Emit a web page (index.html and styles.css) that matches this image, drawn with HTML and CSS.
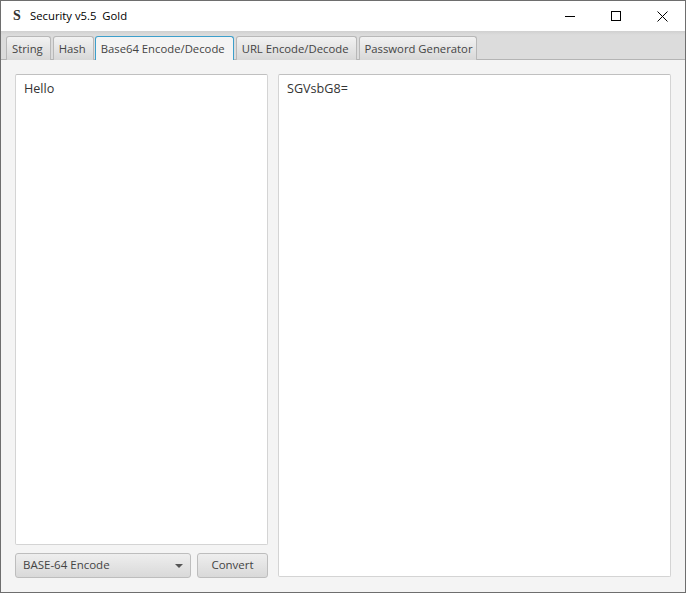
FILE: index.html
```html
<!DOCTYPE html>
<html lang="en">
<head>
<meta charset="utf-8">
<title>Security v5.5 Gold</title>
<link rel="stylesheet" href="styles.css">
</head>
<body>
<div class="window">
  <header class="titlebar">
    <span class="app-icon">S</span>
    <span class="app-title">Security v5.5&nbsp; Gold</span>
    <div class="controls">
      <span class="ctl"><svg width="10" height="10" viewBox="0 0 10 10"><path d="M0 5.5H10" stroke="#000" fill="none"/></svg></span>
      <span class="ctl"><svg width="10" height="10" viewBox="0 0 10 10"><rect x=".5" y=".5" width="9" height="9" stroke="#000" fill="none"/></svg></span>
      <span class="ctl"><svg width="11" height="11" viewBox="0 0 11 11"><path d="M.5 .5L10.5 10.5M10.5 .5L.5 10.5" stroke="#000" fill="none" stroke-width="1"/></svg></span>
    </div>
  </header>
  <nav class="tabs">
    <span class="tab">String</span>
    <span class="tab">Hash</span>
    <span class="tab active">Base64 Encode/Decode</span>
    <span class="tab">URL Encode/Decode</span>
    <span class="tab tab-last">Password Generator</span>
  </nav>
  <main class="content">
    <section class="left">
      <div class="area left-area">Hello</div>
      <div class="actions">
        <div class="combo"><span>BASE-64 Encode</span><i class="arrow"></i></div>
        <div class="btn">Convert</div>
      </div>
    </section>
    <div class="area right-area">SGVsbG8=</div>
  </main>
</div>
</body>
</html>
```
FILE: styles.css
```css
* { box-sizing: border-box; }
html, body { margin: 0; padding: 0; }
body { width: 686px; height: 593px; overflow: hidden; font-family: "Open Sans", "Noto Sans", sans-serif; font-size: 11.3px; color: #333; }
.window { width: 686px; height: 593px; border: 1px solid #6e6e6e; display: flex; flex-direction: column; background: #f4f4f4; }
.titlebar { height: 30px; flex: none; background: #fff; display: flex; align-items: center; color: #000; }
.app-icon { width: 29px; padding-left: 12px; font-family: "Liberation Serif", serif; font-weight: 700; font-size: 14px; color: #333; }
.app-title { font-size: 11.3px; line-height: 30px; }
.controls { margin-left: auto; display: flex; height: 30px; }
.ctl { width: 46px; display: flex; align-items: center; justify-content: center; }
.tabs { height: 29px; flex: none; background: linear-gradient(#d0d0d0, #dcdcdc 4px); border-bottom: 1px solid #b4b4b4; display: flex; gap: 2px; padding: 5px 0 0 5px; align-items: stretch; }
.tab { height: 24px; padding: 0 7px 0 5px; border: 1px solid #b8b8b8; border-bottom: 0; border-radius: 3px 3px 0 0; background: linear-gradient(#f2f2f2, #d8d8d8); color: #444; line-height: 24px; white-space: nowrap; }
.tab.active { background: #f4f4f4; border-color: #3d9fcb; border-width: 1px 1px 0; padding: 0 8px 0 5px; margin-left: -1px; }
.tab-last { padding-right: 3px; }
.content { flex: 1; display: flex; gap: 10px; padding: 14px; min-height: 0; }
.left { width: 253px; flex: none; display: flex; flex-direction: column; gap: 8px; }
.area { background: #fff; border: 1px solid #d4d4d4; border-top-color: #c0c0c0; border-radius: 2px; padding: 5px 8px; line-height: 17px; color: #333; font-size: 12.6px; }
.left-area { flex: 1; min-height: 0; }
.right-area { width: 393px; flex: none; margin-bottom: 1px; }
.actions { display: flex; gap: 6px; height: 25px; flex: none; }
.combo, .btn { height: 25px; border: 1px solid #bdbdbd; border-radius: 3px; background: linear-gradient(#eeeeee, #d9d9d9); color: #444; line-height: 22px; font-size: 11.5px; }
.combo { width: 176px; display: flex; align-items: flex-start; justify-content: space-between; padding: 0 6px 0 7px; }
.arrow { width: 0; height: 0; border-left: 4px solid transparent; border-right: 4px solid transparent; border-top: 4px solid #555; margin: 10px 1px 0 0; }
.btn { width: 71px; text-align: center; }
```
